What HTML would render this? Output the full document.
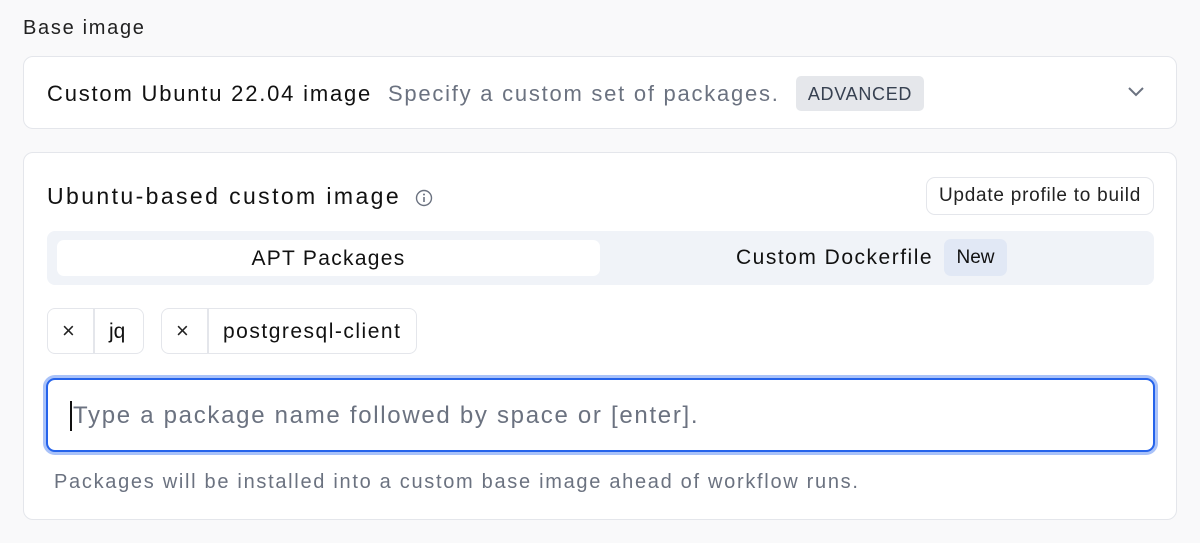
<!DOCTYPE html>
<html><head><style>
*{box-sizing:border-box;margin:0;padding:0}
body{width:1200px;height:543px;background:#f9f9fa;font-family:"Liberation Sans",sans-serif;color:#111;position:relative;overflow:hidden}
.a{position:absolute;white-space:nowrap}
.card{background:#fff;border:1.5px solid #e4e6eb;border-radius:10px}
</style></head><body>
<div class="a" style="left:23px;top:17px;font-size:20px;color:#222;letter-spacing:1.7px">Base image</div>
<div class="a card" style="left:23px;top:56px;width:1154px;height:73px"></div>
<div class="a" style="left:47px;top:81px;font-size:22px;color:#111;letter-spacing:1.8px">Custom Ubuntu 22.04 image</div>
<div class="a" style="left:388px;top:81px;font-size:22px;color:#6b7280;letter-spacing:1.75px">Specify a custom set of packages.</div>
<div class="a" style="left:796px;top:76px;width:128px;height:35px;background:#e5e7eb;border-radius:5px;font-size:18px;color:#374151;text-align:center;line-height:36px;letter-spacing:0.7px">ADVANCED</div>
<svg class="a" style="left:1126px;top:84px" width="20" height="14" viewBox="0 0 20 14"><path d="M3 4l7 7 7-7" fill="none" stroke="#6b7280" stroke-width="2"/></svg>

<div class="a card" style="left:23px;top:152px;width:1154px;height:368px"></div>
<div class="a" style="left:47px;top:183px;font-size:23px;color:#111;letter-spacing:2.4px">Ubuntu-based custom image</div>
<svg class="a" style="left:414px;top:188px" width="20" height="20" viewBox="0 0 20 20"><circle cx="10" cy="10" r="7.5" fill="none" stroke="#6b7280" stroke-width="1.4"/><path d="M10 9v5" stroke="#6b7280" stroke-width="1.6"/><circle cx="10" cy="6.5" r="1" fill="#6b7280"/></svg>
<div class="a" style="left:926px;top:177px;width:228px;height:38px;border:1.5px solid #e4e6eb;border-radius:9px;font-size:19px;color:#222;text-align:center;line-height:36px;letter-spacing:0.75px">Update profile to build</div>
<div class="a" style="left:47px;top:231px;width:1107px;height:54px;background:#f0f3f8;border-radius:8px"></div>
<div class="a" style="left:57px;top:240px;width:543px;height:36px;background:#fff;border-radius:7px;font-size:21px;text-align:center;line-height:37px;color:#111;letter-spacing:1.3px">APT Packages</div>
<div class="a" style="left:736px;top:246px;font-size:21px;color:#111;letter-spacing:1.5px">Custom Dockerfile</div>
<div class="a" style="left:944px;top:239px;width:63px;height:37px;background:#e1e8f5;border-radius:7px;font-size:19px;text-align:center;line-height:38px;color:#111">New</div>

<div class="a" style="left:47px;top:308px;width:97px;height:46px;border:1.5px solid #e4e6eb;border-radius:8px"></div>
<div class="a" style="left:93px;top:309px;width:1.5px;height:44px;background:#e4e6eb"></div>
<div class="a" style="left:62px;top:318px;font-size:22px;color:#222">×</div>
<div class="a" style="left:109px;top:320px;font-size:21px">jq</div>
<div class="a" style="left:161px;top:308px;width:256px;height:46px;border:1.5px solid #e4e6eb;border-radius:8px"></div>
<div class="a" style="left:207px;top:309px;width:1.5px;height:44px;background:#e4e6eb"></div>
<div class="a" style="left:176px;top:318px;font-size:22px;color:#222">×</div>
<div class="a" style="left:223px;top:320px;font-size:21px;letter-spacing:1.5px">postgresql-client</div>

<div class="a" style="left:43px;top:375px;width:1115px;height:80px;border:4px solid #a9c2f9;border-radius:12px"></div>
<div class="a" style="left:46px;top:378px;width:1109px;height:74px;border:2px solid #2563eb;border-radius:9px;background:#fff"></div>
<div class="a" style="left:70px;top:401px;width:2px;height:30px;background:#111"></div>
<div class="a" style="left:73px;top:402px;font-size:24px;color:#6b7280;letter-spacing:1.7px">Type a package name followed by space or [enter].</div>
<div class="a" style="left:54px;top:471px;font-size:20px;color:#6b7280;letter-spacing:1.7px">Packages will be installed into a custom base image ahead of workflow runs.</div>
</body></html>
